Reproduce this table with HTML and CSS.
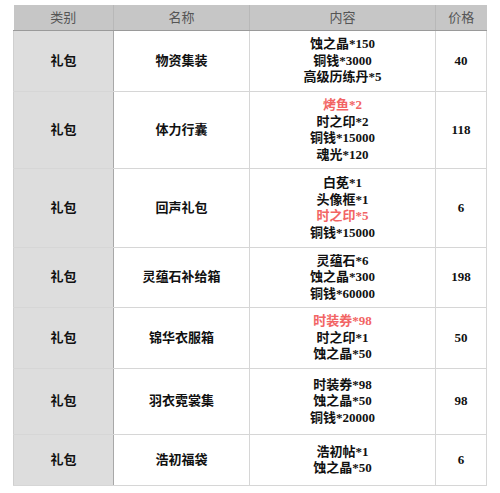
FILE: index.html
```html
<!DOCTYPE html>
<html lang="zh">
<head>
<meta charset="utf-8">
<link rel="stylesheet" href="styles.css">
</head>
<body>
<table class="gift-table">
  <colgroup>
    <col class="c-type"><col class="c-name"><col class="c-content"><col class="c-price">
  </colgroup>
  <thead>
    <tr class="head-row"><th>类别</th><th>名称</th><th>内容</th><th>价格</th></tr>
  </thead>
  <tbody>
    <tr class="r1"><td class="type">礼包</td><td>物资集装</td><td class="content">蚀之晶*150<br>铜钱*3000<br>高级历练丹*5</td><td>40</td></tr>
    <tr class="r2"><td class="type">礼包</td><td>体力行囊</td><td class="content"><span class="hl">烤鱼*2</span><br>时之印*2<br>铜钱*15000<br>魂光*120</td><td>118</td></tr>
    <tr class="r3"><td class="type">礼包</td><td>回声礼包</td><td class="content">白莬*1<br>头像框*1<br><span class="hl">时之印*5</span><br>铜钱*15000</td><td>6</td></tr>
    <tr class="r4"><td class="type">礼包</td><td>灵蕴石补给箱</td><td class="content">灵蕴石*6<br>蚀之晶*300<br>铜钱*60000</td><td>198</td></tr>
    <tr class="r5"><td class="type">礼包</td><td>锦华衣服箱</td><td class="content"><span class="hl">时装券*98</span><br>时之印*1<br>蚀之晶*50</td><td>50</td></tr>
    <tr class="r6"><td class="type">礼包</td><td>羽衣霓裳集</td><td class="content">时装券*98<br>蚀之晶*50<br>铜钱*20000</td><td>98</td></tr>
    <tr class="r7"><td class="type">礼包</td><td>浩初福袋</td><td class="content">浩初帖*1<br>蚀之晶*50</td><td>6</td></tr>
  </tbody>
</table>
</body>
</html>
```
FILE: styles.css
```css
html, body {
  margin: 0;
  padding: 0;
  background: #ffffff;
}
body {
  padding: 5px 0 0 13px;
}
.gift-table {
  border-collapse: collapse;
  table-layout: fixed;
  width: 473px;
  font-family: "Liberation Serif", "Noto Sans CJK SC", serif;
  font-size: 13px;
  line-height: 16.5px;
  color: #111;
}
.c-type { width: 100px; }
.c-name { width: 136px; }
.c-content { width: 186px; }
.c-price { width: 51px; }
.head-row th {
  height: 25px;
  background: #c6c6c6;
  color: #555;
  font-family: "Noto Sans CJK SC", sans-serif;
  font-weight: 400;
  font-size: 13px;
  padding: 0;
  border-left: 1px solid #b8b8b8;
  border-bottom: 1px solid #9a9a9a;
}
.head-row th:first-child { border-left: none; }
td {
  text-align: center;
  vertical-align: middle;
  font-weight: 700;
  padding: 0;
  border: 1px solid #d6d6d6;
}
td.type {
  background: #dddddd;
  border-left: 1px solid #cfcfcf;
  border-right: 1px solid #a8a8a8;
}
.hl { color: #f26464; }
.r1 td { height: 60px; }
.r2 td { height: 76px; }
.r3 td { height: 78px; }
.r4 td { height: 59px; }
.r5 td { height: 60px; }
.r6 td { height: 65px; }
.r7 td { height: 50px; }
```
